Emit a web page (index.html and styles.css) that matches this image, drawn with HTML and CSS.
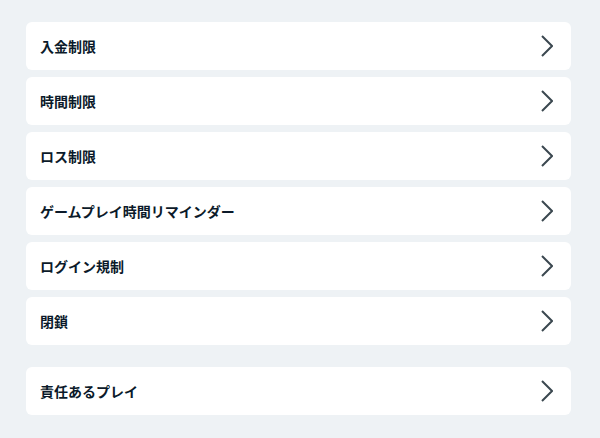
FILE: index.html
```html
<!DOCTYPE html>
<html lang="ja">
<head>
    <meta charset="UTF-8">
    <meta name="viewport" content="width=device-width, initial-scale=1.0">
    <title>制限設定</title>
    <link rel="stylesheet" href="styles.css">
</head>
<body>
    <div class="menu">
        <div class="group">
            <a class="item" href="#"><span>入金制限</span><svg class="chevron" viewBox="0 0 12 22"><path d="M1 1 L11 11 L1 21"/></svg></a>
            <a class="item" href="#"><span>時間制限</span><svg class="chevron" viewBox="0 0 12 22"><path d="M1 1 L11 11 L1 21"/></svg></a>
            <a class="item" href="#"><span>ロス制限</span><svg class="chevron" viewBox="0 0 12 22"><path d="M1 1 L11 11 L1 21"/></svg></a>
            <a class="item" href="#"><span>ゲームプレイ時間リマインダー</span><svg class="chevron" viewBox="0 0 12 22"><path d="M1 1 L11 11 L1 21"/></svg></a>
            <a class="item" href="#"><span>ログイン規制</span><svg class="chevron" viewBox="0 0 12 22"><path d="M1 1 L11 11 L1 21"/></svg></a>
            <a class="item" href="#"><span>閉鎖</span><svg class="chevron" viewBox="0 0 12 22"><path d="M1 1 L11 11 L1 21"/></svg></a>
        </div>
        <div class="group">
            <a class="item" href="#"><span>責任あるプレイ</span><svg class="chevron" viewBox="0 0 12 22"><path d="M1 1 L11 11 L1 21"/></svg></a>
        </div>
    </div>
</body>
</html>
```

FILE: styles.css
```css
body {
    margin: 0;
    background: #eef2f5;
    font-family: "Noto Sans CJK JP", "Noto Sans", sans-serif;
}
.menu {
    padding: 22px 29px 22px 26px;
    display: flex;
    flex-direction: column;
    gap: 22px;
}
.group {
    display: flex;
    flex-direction: column;
    gap: 7px;
}
.item {
    display: flex;
    align-items: center;
    justify-content: space-between;
    height: 48px;
    padding: 0 18px 0 14px;
    background: #fff;
    border-radius: 6px;
    color: #0b1a2a;
    font-size: 14px;
    font-weight: bold;
    text-decoration: none;
}
.chevron {
    width: 12px;
    height: 22px;
    fill: none;
    stroke: #3b4850;
    stroke-width: 2;
}
```
